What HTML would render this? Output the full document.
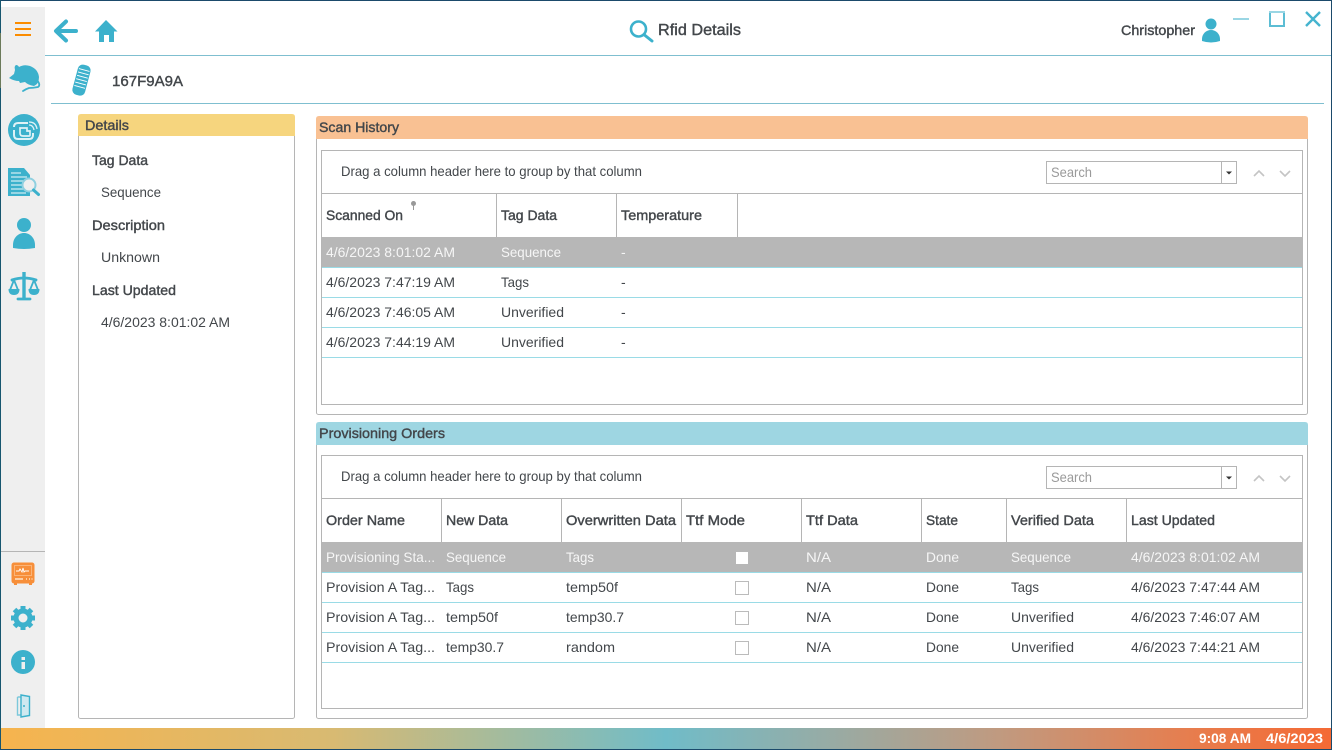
<!DOCTYPE html>
<html><head><meta charset="utf-8"><title>Rfid Details</title>
<style>
html,body{margin:0;padding:0;background:#fff;width:1332px;height:750px;overflow:hidden}
svg{display:block}
text{font-family:"Liberation Sans",sans-serif;font-size:14px;fill:#43474b}
.b{fill:#43474b;stroke:#43474b;stroke-width:.4px}
.w{fill:#f6f6f6}
.s{fill:#9a9a9a}
.f{font-weight:bold;fill:#fff}
.ic{fill:#3cb1cc}
</style></head><body>
<svg width="1332" height="750" viewBox="0 0 1332 750" xmlns="http://www.w3.org/2000/svg">
<defs>
<linearGradient id="g" x1="0" x2="1" y1="0" y2="0">
<stop offset="0" stop-color="#f6b44e"/><stop offset=".25" stop-color="#d8ba72"/><stop offset=".5" stop-color="#70bcc8"/><stop offset=".75" stop-color="#c09a80"/><stop offset=".9" stop-color="#e87c4c"/><stop offset="1" stop-color="#f46a35"/>
</linearGradient>
</defs>
<rect width="1332" height="750" fill="#fff"/>
<!-- sidebar -->
<rect x="1" y="7" width="44" height="721" fill="#efefef"/>
<rect x="0" y="0" width="1332" height="1" fill="#1b4a6b"/>
<rect x="0" y="0" width="1" height="750" fill="#17566f"/>
<rect x="0" y="33" width="1" height="55" fill="#6b7a5a"/>
<rect x="1331" y="0" width="1" height="750" fill="#1b4a6b"/>
<rect x="1" y="551" width="44" height="1" fill="#b5b5b5"/>
<!-- hamburger -->
<path d="M15 23h16M15 29h16M15 35h16" stroke="#fb8c00" stroke-width="2"/>
<!-- mouse -->
<path class="ic" d="M9 78L14 74L15 70Q14 66 16 65Q18 65 19 67Q24 64 30 66Q38 69 39 77Q39 84 34 86Q28 85 25 82L20 83L19 81Q14 81 9 78z"/>
<path d="M37 80Q41 85 38 87Q33 88 29 88Q26 89 23 91" fill="none" stroke="#3cb1cc" stroke-width="1.8" stroke-linecap="round"/>
<!-- rfid circle -->
<circle class="ic" cx="24" cy="130" r="16"/>
<path d="M14 127q0-4 4-4h10M33 133v2q0 4-4 4h-11q-4 0-4-4v-5" fill="none" stroke="#dff2f6" stroke-width="2"/>
<path d="M20 128h7v3h3v4q0 1-1 1h-6q-3 0-3-3z" fill="none" stroke="#dff2f6" stroke-width="1.700"/>
<path d="M29 125q4 0 5 5M29 122q7 0 8 7" fill="none" stroke="#dff2f6" stroke-width="1.300"/>
<!-- doc search -->
<path class="ic" d="M8 168h16l6 7v21H8z"/>
<path d="M11 173h10M11 177h16M11 181h16M11 185h13M11 189h13M11 193h15" stroke="#cfecf3" stroke-width="1.200"/>
<circle cx="29" cy="185" r="6.500" fill="#efefef" stroke="#8fd0e0" stroke-width="2"/>
<path d="M33.500 190l5 4.500" stroke="#3cb1cc" stroke-width="3" stroke-linecap="round"/>
<!-- person -->
<circle class="ic" cx="24" cy="225" r="7"/>
<path class="ic" d="M13 248v-3c0-7 5-12 11-12s11 5 11 12v3q-11 2-22 0z"/>
<!-- scale -->
<path d="M24 272v27" stroke="#3cb1cc" stroke-width="3.400"/>
<path d="M18 299h12M12 280q12-4 24 0" fill="none" stroke="#3cb1cc" stroke-width="2.800" stroke-linecap="round"/>
<path d="M14 280l-4 10M14 280l4 10M34 280l-4 10M34 280l4 10" stroke="#3cb1cc" stroke-width="1.800"/>
<path class="ic" d="M8.500 289h11q0 6-5.500 6t-5.500-6zM28.500 289h11q0 6-5.500 6t-5.500-6z"/>
<!-- monitor -->
<rect x="11.500" y="562.500" width="23" height="21" rx="2.500" fill="#f78f3a"/>
<path d="M14 583h3v2h-3zM29 583h3v2h-3z" fill="#f78f3a"/>
<rect x="14.500" y="565.500" width="17" height="10" fill="none" stroke="#fbb477" stroke-width="1"/>
<path d="M16 571h3l1-2 2 3 1-4 1 4 1-1h4" fill="none" stroke="#fff" stroke-width=".9"/>
<path d="M15 579h8M26 579h1M29 579h1M31.500 579h1" stroke="#fde3c8" stroke-width="1.500"/>
<!-- gear -->
<circle cx="23" cy="618" r="7" fill="none" stroke="#3cb1cc" stroke-width="5"/>
<path d="M23 606v5.500M23 624.500v5.500M11 618h5.500M29.500 618h5.500M14.500 609.500l4 4M27.500 622.500l4 4M31.500 609.500l-4 4M18.500 622.500l-4 4" stroke="#3cb1cc" stroke-width="5"/>
<!-- info -->
<circle class="ic" cx="23" cy="662" r="12"/>
<rect x="21.500" y="662" width="3.500" height="7" fill="#efefef"/>
<rect x="21.500" y="657" width="3.500" height="3" fill="#efefef"/>
<!-- door -->
<path d="M17.500 697v18h4M26 697h-8.500" fill="none" stroke="#7cc8db" stroke-width="1.400"/>
<path d="M21 695l8.500 1.500v19L21 717z" fill="#cfe9f0" stroke="#3cb1cc" stroke-width="1.400"/>
<circle cx="24" cy="706" r="1" fill="#3cb1cc"/>
<!-- header -->
<rect x="45" y="55" width="1286" height="1" fill="#7fbfd0"/>
<path d="M76 31H57M66 21.500l-10 9.500 10 9.500" fill="none" stroke="#3cb1cc" stroke-width="4" stroke-linecap="round" stroke-linejoin="round"/>
<path class="ic" d="M106 20l11.500 11.500H114V42h-5v-7h-5v7h-5V31.500H95z"/>
<circle cx="638.500" cy="29" r="7.500" fill="none" stroke="#3cb1cc" stroke-width="2.600"/>
<path d="M644.500 35l7.500 6" stroke="#3cb1cc" stroke-width="3" stroke-linecap="round"/>
<text class="b" x="658" y="35" style="font-size:16px" textLength="83" lengthAdjust="spacingAndGlyphs">Rfid Details</text>
<text class="b" x="1121" y="35" textLength="74" lengthAdjust="spacingAndGlyphs">Christopher</text>
<circle class="ic" cx="1211" cy="24" r="5.500"/>
<path class="ic" d="M1202 41v-2c0-5 4-9 9-9s9 4 9 9v2q-9 3-18 0z"/>
<path d="M1233 19h16" stroke="#9ad6e4" stroke-width="2"/>
<rect x="1270" y="12" width="14" height="14" fill="none" stroke="#5cbdd4" stroke-width="2"/>
<path d="M1269 12h16" stroke="#9ad6e4" stroke-width="2"/>
<path d="M1306 12l14 14M1320 12l-14 14" stroke="#45b4cf" stroke-width="2.400"/>
<!-- vial -->
<g transform="rotate(15 81 80)">
<rect x="75" y="64.500" width="13" height="31" rx="5" fill="#3cb1cc"/>
<path d="M76 69.500h11M76 73h11M76 76.500h11M76 80h11M76 83.500h11M76 87h11" stroke="#fff" stroke-width=".9"/>
</g>
<text class="b" x="112" y="86" style="font-size:15px" textLength="71" lengthAdjust="spacingAndGlyphs">167F9A9A</text>
<rect x="51" y="103" width="1273" height="1" fill="#7fbfd0"/>
<!-- details panel -->
<rect x="78.500" y="120.500" width="216" height="598" rx="2" fill="#fff" stroke="#b5b5b5"/>
<path d="M78 136v-19q0-3 3-3h211q3 0 3 3v19z" fill="#f6d57e"/>
<text class="b" x="85" y="130" textLength="44" lengthAdjust="spacingAndGlyphs">Details</text>
<text class="b" x="92" y="165" textLength="56" lengthAdjust="spacingAndGlyphs">Tag Data</text>
<text x="101" y="197" textLength="60" lengthAdjust="spacingAndGlyphs">Sequence</text>
<text class="b" x="92" y="230" textLength="73" lengthAdjust="spacingAndGlyphs">Description</text>
<text x="101" y="262" textLength="59" lengthAdjust="spacingAndGlyphs">Unknown</text>
<text class="b" x="92" y="295" textLength="84" lengthAdjust="spacingAndGlyphs">Last Updated</text>
<text x="101" y="327" textLength="129" lengthAdjust="spacingAndGlyphs">4/6/2023 8:01:02 AM</text>
<!-- scan history -->
<rect x="316.500" y="122.500" width="991" height="292" rx="2" fill="#fff" stroke="#b5b5b5"/>
<path d="M316 139v-20q0-3 3-3h986q3 0 3 3v20z" fill="#f9c193"/>
<text class="b" x="319" y="132" textLength="80" lengthAdjust="spacingAndGlyphs">Scan History</text>
<rect x="321.500" y="150.500" width="981" height="254" fill="#fff" stroke="#b5b5b5"/>
<text x="341" y="176" textLength="301" lengthAdjust="spacingAndGlyphs">Drag a column header here to group by that column</text>
<rect x="1046.500" y="161.500" width="190" height="22" fill="#fff" stroke="#b5b5b5"/>
<path d="M1221.500 162v21" stroke="#b5b5b5"/>
<path d="M1226 171.500h6l-3 3z" fill="#333"/>
<text class="s" x="1051" y="177" textLength="41" lengthAdjust="spacingAndGlyphs">Search</text>
<path d="M1254 176l5-5 5 5M1280 171l5 5 5-5" fill="none" stroke="#c4c4c4" stroke-width="1.600"/>
<rect x="322" y="193" width="980" height="1" fill="#b5b5b5"/>
<path d="M496.500 194v43M616.500 194v43M737.500 194v43" stroke="#b5b5b5"/>
<text class="b" x="326" y="220" textLength="77" lengthAdjust="spacingAndGlyphs">Scanned On</text>
<circle cx="413.500" cy="203.500" r="2.500" fill="#999"/><path d="M413.500 205v5" stroke="#999"/>
<text class="b" x="501" y="220" textLength="56" lengthAdjust="spacingAndGlyphs">Tag Data</text>
<text class="b" x="621" y="220" textLength="81" lengthAdjust="spacingAndGlyphs">Temperature</text>
<rect x="322" y="237" width="981" height="30" fill="#b7b7b7"/>
<path d="M322 267.500h980M322 297.500h980M322 327.500h980M322 357.500h980" stroke="#9adbe6"/>
<text class="w" x="326" y="257" textLength="129" lengthAdjust="spacingAndGlyphs">4/6/2023 8:01:02 AM</text>
<text class="w" x="501" y="257" textLength="60" lengthAdjust="spacingAndGlyphs">Sequence</text>
<text class="w" x="621" y="257">-</text>
<text x="326" y="287" textLength="129" lengthAdjust="spacingAndGlyphs">4/6/2023 7:47:19 AM</text>
<text x="501" y="287" textLength="28" lengthAdjust="spacingAndGlyphs">Tags</text>
<text x="621" y="287">-</text>
<text x="326" y="317" textLength="129" lengthAdjust="spacingAndGlyphs">4/6/2023 7:46:05 AM</text>
<text x="501" y="317" textLength="63" lengthAdjust="spacingAndGlyphs">Unverified</text>
<text x="621" y="317">-</text>
<text x="326" y="347" textLength="129" lengthAdjust="spacingAndGlyphs">4/6/2023 7:44:19 AM</text>
<text x="501" y="347" textLength="63" lengthAdjust="spacingAndGlyphs">Unverified</text>
<text x="621" y="347">-</text>
<!-- provisioning -->
<rect x="316.500" y="428.500" width="991" height="290" rx="2" fill="#fff" stroke="#b5b5b5"/>
<path d="M316 445v-20q0-3 3-3h986q3 0 3 3v20z" fill="#9ed6e2"/>
<text class="b" x="319" y="438" textLength="126" lengthAdjust="spacingAndGlyphs">Provisioning Orders</text>
<rect x="321.500" y="455.500" width="981" height="253" fill="#fff" stroke="#b5b5b5"/>
<text x="341" y="481" textLength="301" lengthAdjust="spacingAndGlyphs">Drag a column header here to group by that column</text>
<rect x="1046.500" y="466.500" width="190" height="22" fill="#fff" stroke="#b5b5b5"/>
<path d="M1221.500 467v21" stroke="#b5b5b5"/>
<path d="M1226 476.500h6l-3 3z" fill="#333"/>
<text class="s" x="1051" y="482" textLength="41" lengthAdjust="spacingAndGlyphs">Search</text>
<path d="M1254 481l5-5 5 5M1280 476l5 5 5-5" fill="none" stroke="#c4c4c4" stroke-width="1.600"/>
<rect x="322" y="498" width="980" height="1" fill="#b5b5b5"/>
<path d="M441.500 499v43M561.500 499v43M681.500 499v43M801.500 499v43M921.500 499v43M1006.500 499v43M1126.500 499v43" stroke="#b5b5b5"/>
<text class="b" x="326" y="525" textLength="79" lengthAdjust="spacingAndGlyphs">Order Name</text>
<text class="b" x="446" y="525" textLength="62" lengthAdjust="spacingAndGlyphs">New Data</text>
<text class="b" x="566" y="525" textLength="110" lengthAdjust="spacingAndGlyphs">Overwritten Data</text>
<text class="b" x="686" y="525" textLength="59" lengthAdjust="spacingAndGlyphs">Ttf Mode</text>
<text class="b" x="806" y="525" textLength="52" lengthAdjust="spacingAndGlyphs">Ttf Data</text>
<text class="b" x="926" y="525" textLength="32" lengthAdjust="spacingAndGlyphs">State</text>
<text class="b" x="1011" y="525" textLength="83" lengthAdjust="spacingAndGlyphs">Verified Data</text>
<text class="b" x="1131" y="525" textLength="84" lengthAdjust="spacingAndGlyphs">Last Updated</text>
<rect x="322" y="542" width="981" height="30" fill="#b7b7b7"/>
<path d="M322 572.500h980M322 602.500h980M322 632.500h980M322 662.500h980" stroke="#9adbe6"/>
<text class="w" x="326" y="562" textLength="109" lengthAdjust="spacingAndGlyphs">Provisioning Sta...</text>
<text class="w" x="446" y="562" textLength="60" lengthAdjust="spacingAndGlyphs">Sequence</text>
<text class="w" x="566" y="562" textLength="28" lengthAdjust="spacingAndGlyphs">Tags</text>
<rect x="736" y="552" width="12" height="12" fill="#fff"/>
<text class="w" x="806" y="562" textLength="25" lengthAdjust="spacingAndGlyphs">N/A</text>
<text class="w" x="926" y="562" textLength="33" lengthAdjust="spacingAndGlyphs">Done</text>
<text class="w" x="1011" y="562" textLength="60" lengthAdjust="spacingAndGlyphs">Sequence</text>
<text class="w" x="1131" y="562" textLength="129" lengthAdjust="spacingAndGlyphs">4/6/2023 8:01:02 AM</text>
<text x="326" y="592" textLength="109" lengthAdjust="spacingAndGlyphs">Provision A Tag...</text>
<text x="446" y="592" textLength="28" lengthAdjust="spacingAndGlyphs">Tags</text>
<text x="566" y="592" textLength="52" lengthAdjust="spacingAndGlyphs">temp50f</text>
<rect x="735.500" y="581.500" width="13" height="13" fill="#fff" stroke="#bbb"/>
<text x="806" y="592" textLength="25" lengthAdjust="spacingAndGlyphs">N/A</text>
<text x="926" y="592" textLength="33" lengthAdjust="spacingAndGlyphs">Done</text>
<text x="1011" y="592" textLength="28" lengthAdjust="spacingAndGlyphs">Tags</text>
<text x="1131" y="592" textLength="129" lengthAdjust="spacingAndGlyphs">4/6/2023 7:47:44 AM</text>
<text x="326" y="622" textLength="109" lengthAdjust="spacingAndGlyphs">Provision A Tag...</text>
<text x="446" y="622" textLength="52" lengthAdjust="spacingAndGlyphs">temp50f</text>
<text x="566" y="622" textLength="58" lengthAdjust="spacingAndGlyphs">temp30.7</text>
<rect x="735.500" y="611.500" width="13" height="13" fill="#fff" stroke="#bbb"/>
<text x="806" y="622" textLength="25" lengthAdjust="spacingAndGlyphs">N/A</text>
<text x="926" y="622" textLength="33" lengthAdjust="spacingAndGlyphs">Done</text>
<text x="1011" y="622" textLength="63" lengthAdjust="spacingAndGlyphs">Unverified</text>
<text x="1131" y="622" textLength="129" lengthAdjust="spacingAndGlyphs">4/6/2023 7:46:07 AM</text>
<text x="326" y="652" textLength="109" lengthAdjust="spacingAndGlyphs">Provision A Tag...</text>
<text x="446" y="652" textLength="58" lengthAdjust="spacingAndGlyphs">temp30.7</text>
<text x="566" y="652" textLength="49" lengthAdjust="spacingAndGlyphs">random</text>
<rect x="735.500" y="641.500" width="13" height="13" fill="#fff" stroke="#bbb"/>
<text x="806" y="652" textLength="25" lengthAdjust="spacingAndGlyphs">N/A</text>
<text x="926" y="652" textLength="33" lengthAdjust="spacingAndGlyphs">Done</text>
<text x="1011" y="652" textLength="63" lengthAdjust="spacingAndGlyphs">Unverified</text>
<text x="1131" y="652" textLength="129" lengthAdjust="spacingAndGlyphs">4/6/2023 7:44:21 AM</text>
<!-- footer -->
<rect x="1" y="728" width="1330" height="21" fill="url(#g)"/>
<rect x="0" y="749" width="1332" height="1" fill="#1b4a6b"/>
<text class="f" x="1199" y="743" textLength="52" lengthAdjust="spacingAndGlyphs">9:08 AM</text>
<text class="f" x="1266" y="743" textLength="57" lengthAdjust="spacingAndGlyphs">4/6/2023</text>
</svg>
</body></html>
